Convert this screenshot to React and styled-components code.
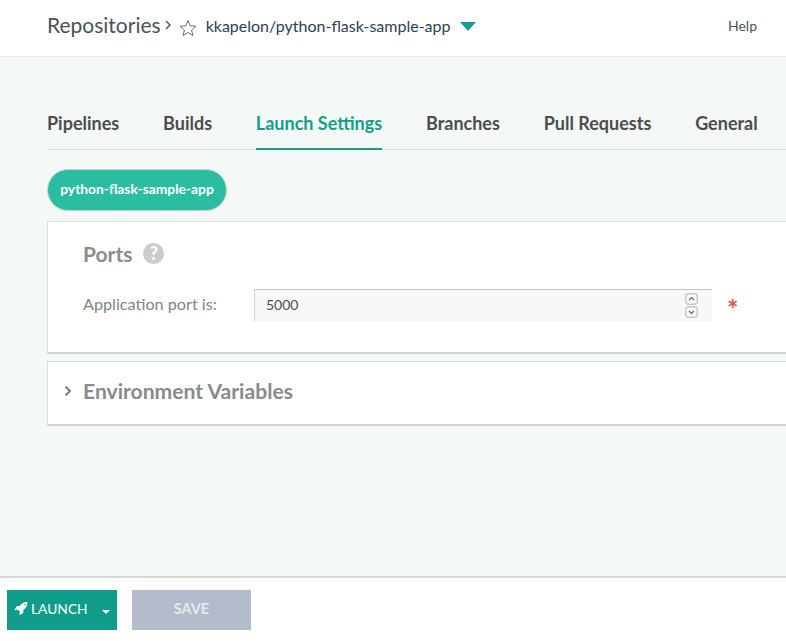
import React from "react";
import styled, { createGlobalStyle } from "styled-components";

const GlobalStyle = createGlobalStyle`
  html, body {
    margin: 0;
    padding: 0;
    height: 100%;
    overflow: hidden;
    background: #fff;
    font-family: Lato, "Liberation Sans", sans-serif;
  }
  #root { height: 100%; }
`;

const Page = styled.div`
  display: flex;
  flex-direction: column;
  width: 786px;
  height: 641px;
  overflow: hidden;
`;

const Header = styled.header`
  display: flex;
  align-items: center;
  height: 57px;
  padding: 0 29px 6px 47px;
  box-sizing: border-box;
  background: #fff;
  border-bottom: 1px solid #e6ebea;
  flex: none;
`;

const Crumb = styled.span`
  padding-bottom: 2px;
  font-size: 21px;
  color: #4b5358;
`;

const Chevron = styled.svg`
  width: 8px;
  height: 10px;
  margin: 0 7px 0 3px;
  fill: none;
  stroke: #4b5358;
  stroke-width: 1.4;
`;

const Star = styled.svg`
  width: 18px;
  height: 18px;
  margin: 5px 9px 0 0;
  fill: none;
  stroke: #555b60;
  stroke-width: 1.2;
`;

const RepoName = styled.span`
  font-size: 16px;
  color: #2f3f52;
`;

const Caret = styled.span`
  width: 0;
  height: 0;
  margin: 2px 0 0 9px;
  border-left: 8.500px solid transparent;
  border-right: 8.500px solid transparent;
  border-top: 9px solid #12a08b;
`;

const Help = styled.span`
  margin-left: auto;
  font-size: 14px;
  color: #4b5358;
`;

const Main = styled.main`
  flex: 1;
  padding: 48px 0 0 47px;
  background: #f4f8f7;
  min-height: 0;
`;

const Tabs = styled.nav`
  display: flex;
  gap: 43.8px;
  height: 45px;
  box-sizing: border-box;
  border-bottom: 1px solid #d9dddc;
`;

const Tab = styled.a`
  height: 45px;
  box-sizing: border-box;
  padding-top: 6px;
  font-size: 18px;
  font-weight: 700;
  line-height: 24px;
  white-space: nowrap;
  color: ${props => (props.$active ? "#12a08b" : "#4d4d4d")};
  border-bottom: ${props => (props.$active ? "2px solid #12a08b" : "none")};
`;

const Pill = styled.div`
  display: flex;
  align-items: center;
  justify-content: center;
  width: 180px;
  height: 42px;
  margin-top: 19px;
  padding-bottom: 4px;
  box-sizing: border-box;
  border: 1px solid #c9d6d3;
  border-radius: 21px;
  background: #2bbd9f;
  color: #fff;
  font-size: 13.8px;
  font-weight: 700;
`;

const Panel = styled.section`
  width: 800px;
  box-sizing: border-box;
  background: #fff;
  border: 1px solid #dcdfde;
  border-bottom: 2px solid #d2d5d4;
  margin-top: ${props => props.$top}px;
  height: ${props => props.$height}px;
`;

const PanelBody = styled.div`
  padding: 16px 0 0 35px;
`;

const SectionTitle = styled.div`
  display: flex;
  align-items: center;
  gap: 11px;
  height: 30px;
  font-size: 21px;
  font-weight: 700;
  color: #8d8d87;
`;

const HelpBadge = styled.span`
  display: flex;
  align-items: center;
  justify-content: center;
  width: 21px;
  height: 21px;
  border-radius: 50%;
  background: #cccccc;
  color: #fff;
  font-size: 18px;
  font-weight: 900;
`;

const FieldRow = styled.div`
  display: flex;
  align-items: center;
  margin-top: 21px;
`;

const FieldLabel = styled.label`
  width: 171px;
  padding-bottom: 3px;
  font-size: 16.2px;
  color: #7f8485;
`;

const InputBox = styled.div`
  display: flex;
  align-items: center;
  justify-content: space-between;
  width: 458px;
  height: 32px;
  box-sizing: border-box;
  padding: 0 14px 2px 11px;
  background: #f8f8f8;
  border-top: 1px solid #c4c4c4;
  border-left: 1px solid #d4d4d4;
  font-size: 14px;
  color: #4d4d4d;
`;

const Spinner = styled.div`
  display: flex;
  flex-direction: column;
  gap: 1px;
  margin-top: 2px;
`;

const SpinnerBtn = styled.svg`
  display: block;
  width: 13px;
  height: 12px;
  fill: none;
  stroke: #666;
  stroke-width: 1.1;
`;

const SpinnerFrame = styled.rect`
  stroke: #c6c6c6;
  stroke-width: 1.4;
`;

const Required = styled.span`
  margin: 8px 0 0 15px;
  font-size: 27px;
  font-weight: 700;
  line-height: 20px;
  color: #f4504f;
`;

const Accordion = styled.div`
  display: flex;
  align-items: center;
  height: 57px;
  padding-left: 16px;
  font-size: 21.1px;
  font-weight: 700;
  color: #8a8a8a;
`;

const AccordionIcon = styled.svg`
  width: 8px;
  height: 12px;
  margin-right: 11px;
  fill: none;
  stroke: #7d7d7d;
  stroke-width: 2;
`;

const Footer = styled.footer`
  display: flex;
  align-items: flex-start;
  gap: 15px;
  flex: none;
  height: 65px;
  padding: 12px 0 0 7px;
  box-sizing: border-box;
  background: #fff;
  border-top: 2px solid #d6d8d7;
`;

const LaunchButton = styled.button`
  display: flex;
  align-items: center;
  width: 110px;
  height: 40px;
  padding: 0 0 4px 7px;
  box-sizing: border-box;
  border: 0;
  background: #0f9c8a;
  color: #fff;
  font-family: inherit;
  font-size: 13.8px;
`;

const Rocket = styled.svg`
  width: 14px;
  height: 14px;
  margin-right: 3px;
  fill: #fff;
`;

const SmallCaret = styled.span`
  width: 0;
  height: 0;
  margin-left: 14px;
  margin-top: 7px;
  border-left: 4px solid transparent;
  border-right: 4px solid transparent;
  border-top: 4px solid #fff;
`;

const SaveButton = styled.button`
  width: 119px;
  height: 40px;
  padding: 0 0 4px;
  border: 0;
  background: #b4bccc;
  color: #e6e8ec;
  font-family: inherit;
  font-size: 14.5px;
  font-weight: 700;
`;

export default function App() {
  return (
    <>
      <GlobalStyle />
      <Page>
        <Header>
          <Crumb>Repositories</Crumb>
          <Chevron viewBox="0 0 8 10">
            <path d="M2 1l4 4-4 4" />
          </Chevron>
          <Star viewBox="0 0 24 24">
            <path d="M12 2l3 7 7.500 .7-5.700 5 1.700 7.300L12 18l-6.500 4 1.700-7.300-5.700-5L9 9z" />
          </Star>
          <RepoName>kkapelon/python-flask-sample-app</RepoName>
          <Caret />
          <Help>Help</Help>
        </Header>
        <Main>
          <Tabs>
            <Tab>Pipelines</Tab>
            <Tab>Builds</Tab>
            <Tab $active>Launch Settings</Tab>
            <Tab>Branches</Tab>
            <Tab>Pull Requests</Tab>
            <Tab>General</Tab>
          </Tabs>
          <Pill>python-flask-sample-app</Pill>
          <Panel $top={10} $height={133}>
            <PanelBody>
              <SectionTitle>
                Ports
                <HelpBadge>?</HelpBadge>
              </SectionTitle>
              <FieldRow>
                <FieldLabel>Application port is:</FieldLabel>
                <InputBox>
                  5000
                  <Spinner>
                    <SpinnerBtn viewBox="0 0 13 12">
                      <SpinnerFrame x=".7" y=".7" width="11.600" height="10.600" rx="3" />
                      <path d="M4 7l2.500-2.500L9 7" />
                    </SpinnerBtn>
                    <SpinnerBtn viewBox="0 0 13 12">
                      <SpinnerFrame x=".7" y=".7" width="11.600" height="10.600" rx="3" />
                      <path d="M4 5l2.500 2.500L9 5" />
                    </SpinnerBtn>
                  </Spinner>
                </InputBox>
                <Required>*</Required>
              </FieldRow>
            </PanelBody>
          </Panel>
          <Panel $top={7} $height={65}>
            <Accordion>
              <AccordionIcon viewBox="0 0 8 12">
                <path d="M1.500 1.500L6 6l-4.500 4.500" />
              </AccordionIcon>
              Environment Variables
            </Accordion>
          </Panel>
        </Main>
        <Footer>
          <LaunchButton>
            <Rocket viewBox="0 0 1792 1792">
              <path d="M1504 448q0-40-28-68t-68-28-68 28-28 68 28 68 68 28 68-28 28-68zm224-288q0 249-75.500 430.500t-253.500 360.500q-81 80-195 176l-20 379q-2 16-16 26l-384 224q-7 4-16 4-12 0-23-9l-64-64q-13-14-8-32l85-276-281-281-276 85q-3 1-9 1-14 0-23-9l-64-64q-17-19-5-39l224-384q10-14 26-16l379-20q96-114 176-195 188-187 358-258t431-71q14 0 24 9.500t10 22.500z" />
            </Rocket>
            LAUNCH
            <SmallCaret />
          </LaunchButton>
          <SaveButton>SAVE</SaveButton>
        </Footer>
      </Page>
    </>
  );
}
